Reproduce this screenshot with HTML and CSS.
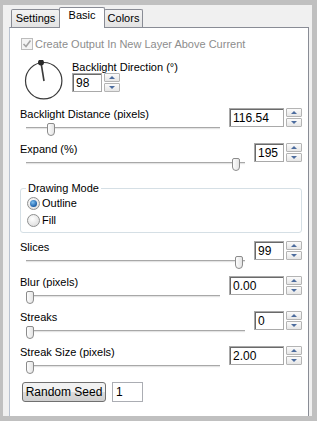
FILE: index.html
```html
<!DOCTYPE html>
<html lang="en">
<head>
    <meta charset="UTF-8">
    <meta name="viewport" content="width=device-width, initial-scale=1.0">
    <title>Backlight</title>
    <link rel="stylesheet" href="styles.css">
</head>
<body>
    <div class="frame">
        <div class="tabs">
            <div class="tab tab-settings">Settings</div>
            <div class="tab tab-basic active">Basic</div>
            <div class="tab tab-colors">Colors</div>
        </div>

        <div class="panel">
            <div class="check-row">
                <span class="checkbox disabled">
                    <svg width="10" height="10" viewBox="0 0 10 10"><path d="M1.5 5 L4 7.5 L8.5 1.5" fill="none" stroke="#a4a4a4" stroke-width="1.6"/></svg>
                </span>
                <span class="muted">Create Output In New Layer Above Current</span>
            </div>

            <div class="dial-row">
                <svg class="dial" width="42" height="42" viewBox="0 0 42 42">
                    <circle cx="20.7" cy="20.7" r="18.2" fill="none" stroke="#3a3a3a" stroke-width="1.2"/>
                    <line x1="18" y1="2.5" x2="21" y2="21" stroke="#3a3a3a" stroke-width="1.6"/>
                    <circle cx="18" cy="2.5" r="3" fill="#2a2a2a"/>
                </svg>
                <div class="dial-info">
                    <div class="label">Backlight Direction (°)</div>
                    <div class="spin narrow-spin">
                        <div class="spin-input">98</div>
                        <div class="spin-buttons">
                            <span class="spin-btn up"></span>
                            <span class="spin-btn down"></span>
                        </div>
                    </div>
                </div>
            </div>

            <div class="field">
                <div class="label">Backlight Distance (pixels)</div>
                <div class="slider"><div class="track"></div><div class="thumb" style="--pos: 0.115"></div></div>
                <div class="spin wide">
                    <div class="spin-input">116.54</div>
                    <div class="spin-buttons"><span class="spin-btn up"></span><span class="spin-btn down"></span></div>
                </div>
            </div>

            <div class="field">
                <div class="label">Expand (%)</div>
                <div class="slider"><div class="track"></div><div class="thumb" style="--pos: 0.975"></div></div>
                <div class="spin">
                    <div class="spin-input">195</div>
                    <div class="spin-buttons"><span class="spin-btn up"></span><span class="spin-btn down"></span></div>
                </div>
            </div>

            <fieldset class="group">
                <legend>Drawing Mode</legend>
                <div class="radio-row"><span class="radio checked"></span>Outline</div>
                <div class="radio-row"><span class="radio"></span>Fill</div>
            </fieldset>

            <div class="field first-after-group">
                <div class="label">Slices</div>
                <div class="slider"><div class="track"></div><div class="thumb" style="--pos: 0.99"></div></div>
                <div class="spin">
                    <div class="spin-input">99</div>
                    <div class="spin-buttons"><span class="spin-btn up"></span><span class="spin-btn down"></span></div>
                </div>
            </div>

            <div class="field">
                <div class="label">Blur (pixels)</div>
                <div class="slider"><div class="track"></div><div class="thumb" style="--pos: 0"></div></div>
                <div class="spin wide">
                    <div class="spin-input">0.00</div>
                    <div class="spin-buttons"><span class="spin-btn up"></span><span class="spin-btn down"></span></div>
                </div>
            </div>

            <div class="field">
                <div class="label">Streaks</div>
                <div class="slider"><div class="track"></div><div class="thumb" style="--pos: 0"></div></div>
                <div class="spin">
                    <div class="spin-input">0</div>
                    <div class="spin-buttons"><span class="spin-btn up"></span><span class="spin-btn down"></span></div>
                </div>
            </div>

            <div class="field">
                <div class="label">Streak Size (pixels)</div>
                <div class="slider"><div class="track"></div><div class="thumb" style="--pos: 0"></div></div>
                <div class="spin wide">
                    <div class="spin-input">2.00</div>
                    <div class="spin-buttons"><span class="spin-btn up"></span><span class="spin-btn down"></span></div>
                </div>
            </div>

            <div class="seed-row">
                <button class="seed-btn">Random Seed</button>
                <div class="seed-input">1</div>
            </div>
        </div>
    </div>
</body>
</html>
```

FILE: styles.css
```css
html, body {
    margin: 0;
    padding: 0;
}

body {
    background-color: #c0c0c0;
    font-family: "Liberation Sans", Arial, sans-serif;
    font-size: 11px;
    color: #000;
    width: 317px;
    height: 421px;
    overflow: hidden;
}

.frame {
    margin: 5px 5px 0 3px;
    width: 309px;
    height: 411px;
    background-color: #f0f0f0;
    overflow: hidden;
}

/* tabs */
.tabs {
    display: flex;
    align-items: flex-end;
    height: 22px;
    padding-left: 8px;
}

.tab {
    box-sizing: border-box;
    height: 18px;
    border: 1px solid #898c95;
    border-bottom: none;
    border-radius: 2px 2px 0 0;
    background: linear-gradient(#f3f3f3, #e3e3e3);
    text-align: center;
    line-height: 16px;
    margin-right: -1px;
}

.tab-settings { width: 49px; }
.tab-basic { width: 46px; }
.tab-colors { width: 39px; }

.tab.active {
    height: 21px;
    margin-bottom: -1px;
    background: #fff;
    line-height: 14px;
    position: relative;
    z-index: 1;
}

/* panel */
.panel {
    box-sizing: border-box;
    margin-left: 6px;
    width: 300px;
    height: 400px;
    background-color: #fff;
    border: 1px solid #898c95;
    border-left-color: #b9c2d0;
    padding: 9px 6px 0 10px;
}

.muted {
    color: #8d8d8d;
}

.check-row {
    display: flex;
    align-items: center;
    height: 14px;
    margin-left: 1px;
}

.checkbox {
    box-sizing: border-box;
    width: 12px;
    height: 12px;
    margin-right: 2px;
    border: 1px solid #bcbcbc;
    background: #f4f4f4;
    display: flex;
    align-items: center;
    justify-content: center;
}

.dial-row {
    display: flex;
    margin-top: 9px;
    height: 41px;
}

.dial {
    margin-left: 3px;
    margin-top: 0;
}

.dial-info {
    margin-left: 7px;
}

.label {
    line-height: 14px;
    height: 13px;
    white-space: nowrap;
}

.dial-info .spin {
    margin-top: 0;
}

/* field with slider + spin box */
.field {
    display: grid;
    grid-template-columns: 1fr auto;
    grid-template-rows: 13px 22px;
    column-gap: 3px;
}

.dial-row + .field {
    margin-top: 6px;
}

.field .label {
    grid-column: 1;
    grid-row: 1;
}

.slider {
    grid-column: 1;
    grid-row: 2;
    position: relative;
    padding: 0 6px;
}

.track {
    margin-top: 7px;
    height: 1px;
    border-top: 1px solid #a8a8a8;
    border-bottom: 1px solid #fafafa;
    background: #e4e4e4;
}

.thumb {
    position: absolute;
    top: 3px;
    left: calc(6px + var(--pos) * (100% - 20px));
    box-sizing: border-box;
    width: 8px;
    height: 13px;
    border: 1px solid #8b8b8b;
    border-radius: 2px 2px 4px 4px;
    background: linear-gradient(to right, #fdfdfd, #e4e4e4);
}

.spin {
    grid-column: 2;
    grid-row: 1 / 3;
    align-self: start;
    margin-top: 1px;
    display: flex;
    gap: 2px;
    height: 19px;
}

.spin-input {
    box-sizing: border-box;
    width: 30px;
    height: 19px;
    border: 1px solid #a9a9a9;
    box-shadow: inset 1px 1px 0 #6a6a6a;
    padding: 2px 0 0 3px;
    font-size: 12px;
    line-height: 14px;
    background: #fff;
}

.spin.wide .spin-input {
    width: 55px;
}

.spin-buttons {
    display: flex;
    flex-direction: column;
    gap: 1px;
}

.spin-btn {
    box-sizing: border-box;
    width: 16px;
    height: 9px;
    border: 1px solid #b4b4b4;
    border-radius: 1px;
    background: linear-gradient(#fbfbfb, #e6e6e6);
    display: flex;
    align-items: center;
    justify-content: center;
}

.spin-btn::after {
    content: "";
    width: 0;
    height: 0;
    border-left: 3px solid transparent;
    border-right: 3px solid transparent;
}

.spin-btn.up::after {
    border-bottom: 3px solid #4c6c9e;
}

.spin-btn.down::after {
    border-top: 3px solid #4c6c9e;
}

/* group box */
.group {
    margin: 5px 0 0 0;
    padding: 1px 6px 5px 6px;
    border: 1px solid #d5dfe5;
    border-radius: 3px;
    min-width: 0;
}

.group legend {
    padding: 0 2px;
    margin-left: -1px;
    line-height: 13px;
}

.radio-row {
    display: flex;
    align-items: center;
    height: 14px;
}

.radio-row + .radio-row {
    margin-top: 3px;
}

.radio {
    box-sizing: border-box;
    width: 13px;
    height: 13px;
    border: 1px solid #8e8f8f;
    border-radius: 50%;
    background: radial-gradient(circle at 40% 35%, #ffffff, #d6d6d6);
    margin-right: 2px;
    display: flex;
    align-items: center;
    justify-content: center;
}

.radio.checked::after {
    content: "";
    width: 7px;
    height: 7px;
    border-radius: 50%;
    background: radial-gradient(circle at 40% 35%, #7fc0f0, #1a5ea8 70%, #123e74);
}

.field.first-after-group {
    margin-top: 7px;
}

/* seed */
.seed-row {
    display: flex;
    margin-top: 2px;
    margin-left: 2px;
}

.seed-btn {
    box-sizing: border-box;
    width: 84px;
    height: 20px;
    border: 1px solid #707070;
    border-radius: 3px;
    background: linear-gradient(#f2f2f2 50%, #dddddd 50%, #cfcfcf);
    font-family: inherit;
    font-size: 12px;
    padding: 0;
    color: #000;
}

.seed-input {
    box-sizing: border-box;
    width: 31px;
    height: 20px;
    margin-left: 6px;
    border: 1px solid #abadb3;
    padding: 2px 0 0 3px;
    font-size: 12px;
    line-height: 14px;
}
```
